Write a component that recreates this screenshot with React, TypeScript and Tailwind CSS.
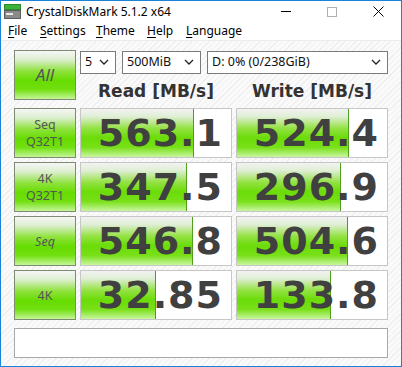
import React from 'react';

type Row = { label: string[]; italic?: boolean; read: string; write: string };

const rows: Row[] = [
  { label: ['Seq', 'Q32T1'], read: '563.1', write: '524.4' },
  { label: ['4K', 'Q32T1'], read: '347.5', write: '296.9' },
  { label: ['Seq'], italic: true, read: '546.8', write: '504.6' },
  { label: ['4K'], read: '32.85', write: '133.8' },
];

// log scale like the real app: 0.1 .. 10000 MB/s over the bar width
const barWidth = (v: string) => Math.round((150 * (Math.log10(parseFloat(v)) + 1)) / 5);

const greenBtn =
  'bg-[linear-gradient(to_bottom,#f6f6f6_0%,#dcefcf_18%,#8ee23c_42%,#66dc00_62%,#72e010_80%,#c4f598_100%)]';

const Chevron = () => (
  <svg width="10" height="6" viewBox="0 0 10 6" className="shrink-0">
    <path d="M1 1 L5 5 L9 1" fill="none" stroke="#222" strokeWidth="1.3" />
  </svg>
);

const Select = ({ text, className }: { text: string; className: string }) => (
  <div className={`h-[23px] bg-white border border-[#7a7a7a] flex items-center justify-between pl-[4px] pr-[6px] text-[12.5px] text-[#111] ${className}`}>
    <span>{text}</span>
    <Chevron />
  </div>
);

const Value = ({ v }: { v: string }) => (
  <div className="relative h-[50px] border border-[#c6c6c6] bg-white overflow-hidden flex items-center justify-end pr-[8px]">
    <div
      className="absolute left-0 top-0 bottom-0 border-r border-[#4f9e1c] bg-[linear-gradient(to_bottom,#f2f2f2_0%,#dfeed4_16%,#94e244_40%,#6bdc08_60%,#78e018_80%,#c9f6a0_100%)]"
      style={{ width: barWidth(v) }}
    />
    <span className="relative font-['DejaVu_Sans',sans-serif] font-bold text-[38px] leading-none text-[#404040] tracking-[1px]">
      {v}
    </span>
  </div>
);

const Menu = ({ first, rest, w }: { first: string; rest: string; w: string }) => (
  <span className={w}>
    <span className="underline underline-offset-[2px]">{first}</span>
    {rest}
  </span>
);

export default function App() {
  return (
    <div className="w-[402px] h-[367px] border border-[#1883d7] flex flex-col bg-white font-['Noto_Sans',sans-serif] overflow-hidden">
      {/* title bar */}
      <div className="h-[27px] flex items-center text-[12px] text-black">
        <svg width="17" height="15" viewBox="0 0 17 15" className="ml-[3px] mr-[5px]">
          <rect x="0.5" y="0.5" width="16" height="5" fill="#3bb33b" stroke="#2b8a2b" />
          <rect x="0.5" y="6.5" width="16" height="8" fill="#8a8a8a" stroke="#5c5c5c" />
          <rect x="2" y="9" width="7" height="2" fill="#e8e8e8" />
        </svg>
        <span>CrystalDiskMark 5.1.2 x64</span>
        <div className="ml-auto flex h-full">
          <div className="w-[46px] flex items-center justify-center">
            <div className="w-[10px] h-[1px] bg-black" />
          </div>
          <div className="w-[46px] flex items-center justify-center">
            <div className="w-[10px] h-[10px] border border-[#b0b0b0]" />
          </div>
          <div className="w-[46px] flex items-center justify-center">
            <svg width="11" height="11" viewBox="0 0 11 11">
              <path d="M0.5 0.5 L10.5 10.5 M10.5 0.5 L0.5 10.5" stroke="#000" strokeWidth="1" />
            </svg>
          </div>
        </div>
      </div>
      {/* menu bar */}
      <div className="h-[17px] flex items-center pl-[7px] text-[12px] text-black">
        <Menu first="F" rest="ile" w="w-[32px]" />
        <Menu first="S" rest="ettings" w="w-[56px]" />
        <Menu first="T" rest="heme" w="w-[51px]" />
        <Menu first="H" rest="elp" w="w-[39px]" />
        <Menu first="L" rest="anguage" w="w-[60px]" />
      </div>
      <div className="h-[1px] bg-[#ececec]" />
      {/* client */}
      <div className="flex-1 px-[13px] pt-[9px] pb-[8px] bg-[repeating-linear-gradient(135deg,#fafafa_0px,#fafafa_3px,#efefef_3px,#efefef_4px)]">
        <div className="grid grid-cols-[62px_152px_152px] gap-x-[4px] gap-y-[4px]">
          <div className={`h-[50px] border border-[#7c8c74] ${greenBtn} flex items-center justify-center text-[17px] italic text-[#555]`}>
            All
          </div>
          <div className="col-span-2 flex flex-col">
            <div className="flex gap-[6px] mt-[1px]">
              <Select text="5" className="w-[36px]" />
              <Select text="500MiB" className="w-[79px]" />
              <Select text="D: 0% (0/238GiB)" className="flex-1" />
            </div>
            <div className="grid grid-cols-2 gap-x-[4px] flex-1 items-center pt-[5px]">
              <div className="text-center font-['DejaVu_Sans',sans-serif] font-bold text-[17px] text-[#333]">Read [MB/s]</div>
              <div className="text-center font-['DejaVu_Sans',sans-serif] font-bold text-[17px] text-[#333]">Write [MB/s]</div>
            </div>
          </div>
          {rows.map((r) => (
            <React.Fragment key={r.label.join('-') + r.read}>
              <div
                className={`h-[50px] border border-[#7c8c74] ${greenBtn} flex flex-col items-center justify-center text-[12.5px] leading-[17px] text-[#555] ${r.italic ? 'italic' : ''}`}
              >
                {r.label.map((l) => (
                  <span key={l}>{l}</span>
                ))}
              </div>
              <Value v={r.read} />
              <Value v={r.write} />
            </React.Fragment>
          ))}
        </div>
        <div className="mt-[8px] h-[30px] border border-[#a8a8a8] bg-white" />
      </div>
    </div>
  );
}
